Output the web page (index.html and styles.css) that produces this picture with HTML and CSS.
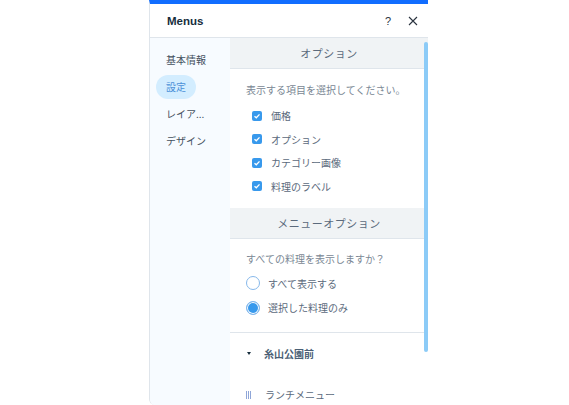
FILE: index.html
```html
<!DOCTYPE html>
<html lang="ja">
<head>
    <meta charset="UTF-8">
    <meta name="viewport" content="width=device-width, initial-scale=1.0">
    <title>Menus</title>
    <link rel="stylesheet" href="styles.css">
</head>
<body>

    <div class="panel">
        <div class="panel-header">
            <span class="panel-title">Menus</span>
            <div class="header-icons">
                <span class="help-icon">?</span>
                <svg class="close-icon" width="10" height="10" viewBox="0 0 10 10">
                    <path d="M1 1L9 9M9 1L1 9" stroke="#2b3440" stroke-width="1.1" fill="none"/>
                </svg>
            </div>
        </div>
        <div class="panel-body">
            <nav class="side-nav">
                <a class="nav-item">基本情報</a>
                <a class="nav-item active">設定</a>
                <a class="nav-item">レイア...</a>
                <a class="nav-item">デザイン</a>
            </nav>
            <div class="content">
                <div class="section-title first">オプション</div>
                <div class="section checks">
                    <p class="question">表示する項目を選択してください。</p>
                    <label class="check-row"><span class="checkbox"><svg width="8" height="8" viewBox="0 0 8 8"><path d="M1.5 4.2L3.3 5.8L6.5 2.4" stroke="#fff" stroke-width="1.3" fill="none"/></svg></span>価格</label>
                    <label class="check-row"><span class="checkbox"><svg width="8" height="8" viewBox="0 0 8 8"><path d="M1.5 4.2L3.3 5.8L6.5 2.4" stroke="#fff" stroke-width="1.3" fill="none"/></svg></span>オプション</label>
                    <label class="check-row"><span class="checkbox"><svg width="8" height="8" viewBox="0 0 8 8"><path d="M1.5 4.2L3.3 5.8L6.5 2.4" stroke="#fff" stroke-width="1.3" fill="none"/></svg></span>カテゴリー画像</label>
                    <label class="check-row"><span class="checkbox"><svg width="8" height="8" viewBox="0 0 8 8"><path d="M1.5 4.2L3.3 5.8L6.5 2.4" stroke="#fff" stroke-width="1.3" fill="none"/></svg></span>料理のラベル</label>
                </div>
                <div class="section-title">メニューオプション</div>
                <div class="section radios">
                    <p class="question">すべての料理を表示しますか？</p>
                    <label class="radio-row"><span class="radio"></span>すべて表示する</label>
                    <label class="radio-row"><span class="radio selected"></span>選択した料理のみ</label>
                </div>
                <div class="tree">
                    <div class="tree-group"><span class="caret"></span>糸山公園前</div>
                    <div class="tree-item">
                        <svg class="drag-icon" width="6" height="8" viewBox="0 0 6 8">
                            <path d="M.5 0V8M2.5 0V8M4.5 0V8" stroke="#8fa6d8" stroke-width="1" fill="none"/>
                        </svg>
                        ランチメニュー
                    </div>
                </div>
                <div class="scrollbar"></div>
            </div>
        </div>
    </div>

</body>
</html>
```

FILE: styles.css
```css
html, body {
    height: 100%;
}
body {
    background-color: #FFFFFF;
    margin: 0;
    padding: 0 0 0 149px;
    box-sizing: border-box;
    overflow: hidden;
    font-family: "Noto Sans CJK JP", "Noto Sans", sans-serif;
    color: #5b6a7c;
}
.panel {
    width: 279px;
    height: 405px;
    box-sizing: border-box;
    border-top: 4px solid #116dff;
    border-left: 1px solid #dfe5eb;
    border-bottom-left-radius: 6px;
    display: flex;
    flex-direction: column;
    overflow: hidden;
}
.panel-header {
    height: 34px;
    flex-shrink: 0;
    box-sizing: border-box;
    display: flex;
    justify-content: space-between;
    align-items: center;
    padding: 0 10px 0 17px;
    border-bottom: 1px solid #dfe5eb;
}
.panel-title {
    font-family: "Liberation Sans", Arial, sans-serif;
    font-size: 11.5px;
    font-weight: bold;
    color: #162d3d;
}
.header-icons {
    display: flex;
    align-items: center;
    gap: 17px;
}
.help-icon {
    font-family: "Liberation Sans", Arial, sans-serif;
    font-size: 11px;
    color: #2b3440;
}
.panel-body {
    flex: 1;
    display: flex;
    min-height: 0;
}

/* Sidebar */
.side-nav {
    width: 80px;
    flex-shrink: 0;
    background-color: #f7fbff;
    box-sizing: border-box;
    padding: 10px 0 0 6px;
    display: flex;
    flex-direction: column;
    align-items: flex-start;
    gap: 3px;
}
.nav-item {
    height: 24px;
    line-height: 24px;
    padding: 0 10px;
    font-size: 10px;
    color: #44505e;
    border-radius: 12px;
}
.nav-item.active {
    background-color: #d3edff;
    color: #4b90d8;
}

/* Right side */
.content {
    flex: 1;
    position: relative;
    min-width: 0;
    background-color: #FFFFFF;
}
.section-title {
    height: 30px;
    line-height: 30px;
    text-align: center;
    font-size: 11px;
    letter-spacing: 0.5px;
    color: #5b6a7c;
    background-color: #f0f3f5;
    border-bottom: 1px solid #dfe5eb;
}
.question {
    margin: 0;
    font-size: 10px;
    line-height: 14px;
    color: #7a8794;
}
.checks {
    padding: 14px 0 11px 16px;
    height: 139px;
    box-sizing: border-box;
}
.check-row {
    display: flex;
    align-items: center;
    height: 23.5px;
    margin-left: 6px;
    font-size: 10px;
    color: #5b6a7c;
}
.checks .question {
    margin-bottom: 7px;
}
.checkbox {
    width: 10px;
    height: 10px;
    border-radius: 2px;
    background-color: #3899ec;
    margin-right: 9px;
    display: flex;
    align-items: center;
    justify-content: center;
}
.radios {
    height: 94px;
    box-sizing: border-box;
    padding: 13px 0 0 16px;
    border-bottom: 1px solid #dfe5eb;
}
.radios .question {
    margin-bottom: 5px;
}
.radio-row {
    display: flex;
    align-items: center;
    height: 24.5px;
    font-size: 10px;
    color: #5b6a7c;
}
.radio {
    width: 12px;
    height: 12px;
    border-radius: 50%;
    border: 1px solid #86b8ea;
    margin-right: 8px;
    background-color: #FFFFFF;
}
.radio.selected {
    background-color: #3899ec;
    box-shadow: inset 0 0 0 1px #FFFFFF;
}
.tree-group {
    display: flex;
    align-items: center;
    height: 41px;
    padding-left: 17px;
    font-size: 10px;
    font-weight: bold;
    color: #4a5f75;
}
.caret {
    width: 0;
    height: 0;
    border-left: 2.5px solid transparent;
    border-right: 2.5px solid transparent;
    border-top: 3px solid #162d3d;
    margin-right: 13px;
}
.tree-item {
    display: flex;
    align-items: center;
    height: 41px;
    padding-left: 16px;
    font-size: 10px;
    color: #5b6a7c;
}
.drag-icon {
    margin-right: 13px;
}
.scrollbar {
    position: absolute;
    top: 4px;
    right: 0;
    width: 4px;
    height: 310px;
    background-color: #8ccbf7;
    border-radius: 2px;
}
```
